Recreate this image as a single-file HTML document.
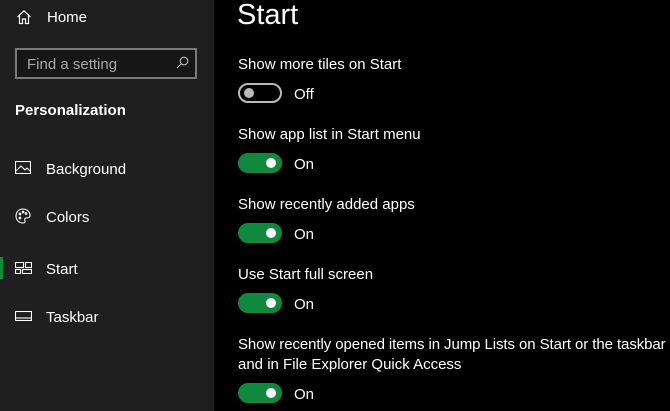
<!DOCTYPE html>
<html><head><style>
body{margin:0;width:670px;height:411px;overflow:hidden;background:#000;font-family:"Liberation Sans",sans-serif;color:#fff;position:relative}
.side{position:absolute;left:0;top:0;width:214px;height:411px;background:#1f1f1f}
.t{position:absolute;white-space:nowrap;line-height:1}
.ic{position:absolute}
.tog{position:absolute;left:238px;width:40px;height:16px;border-radius:10px;background:#10893e;border:2px solid #10893e}
.tog::after{content:"";position:absolute;right:4px;top:3px;width:10px;height:10px;border-radius:50%;background:#fff}
.off{background:#000;border-color:#bbb}
.off::after{left:4px;right:auto;background:#bbb}
</style></head><body>
<div class="side">
<svg class="ic" style="left:16px;top:9px" width="16" height="16" viewBox="0 0 16 16" fill="none" stroke="#fff" stroke-width="1.2"><path d="M1.5 8 L8 1.8 L14.5 8 M3.5 6.5 V14.5 H6.5 V10 H9.5 V14.5 H12.5 V6.5"/></svg>
<div class="t" style="left:47px;top:10px;font-size:15px">Home</div>
<div style="position:absolute;left:15px;top:48px;width:178px;height:27px;border:2px solid #7a7a7a;background:#161616"></div>
<div class="t" style="left:27px;top:57px;font-size:15px;color:#a8a8a8">Find a setting</div>
<svg class="ic" style="left:176px;top:56px" width="13" height="13" viewBox="0 0 13 13" fill="none" stroke="#bbb" stroke-width="1.1"><circle cx="8" cy="5" r="3.8"/><path d="M5.3 7.7 L1 12"/></svg>
<div class="t" style="left:15px;top:103px;font-size:15px;font-weight:bold">Personalization</div>
<svg class="ic" style="left:15px;top:161px" width="16" height="13" viewBox="0 0 16 13" fill="none" stroke="#fff" stroke-width="1.1"><rect x="0.5" y="0.5" width="15" height="12"/><path d="M1 10 L6 5 L10 9 L12 7 L15 10"/></svg>
<div class="t" style="left:46px;top:162px;font-size:15px">Background</div>
<svg class="ic" style="left:15px;top:208px" width="16" height="16" viewBox="0 0 16 16" fill="none" stroke="#fff" stroke-width="1.1"><path d="M8 1 C12 1 15 4 15 7.5 C15 10 12 10 11 10 C9.5 10 9.5 12 10 13 C10.5 14.5 9 15 8 15 C4 15 1 12 1 8 C1 4 4 1 8 1Z"/><circle cx="5" cy="6" r="0.8"/><circle cx="8" cy="4" r="0.8"/><circle cx="11" cy="5.5" r="0.8"/><circle cx="5" cy="10" r="0.8"/></svg>
<div class="t" style="left:46px;top:210px;font-size:15px">Colors</div>
<div style="position:absolute;left:0;top:257px;width:3px;height:22px;background:#10893e"></div>
<svg class="ic" style="left:15px;top:262px" width="17" height="12" viewBox="0 0 17 12" fill="none" stroke="#fff" stroke-width="1.1"><rect x="0.5" y="0.5" width="8" height="5"/><rect x="10.5" y="0.5" width="6" height="5"/><rect x="0.5" y="7.5" width="5" height="4"/><rect x="7.5" y="7.5" width="9" height="4"/></svg>
<div class="t" style="left:46px;top:262px;font-size:15px">Start</div>
<svg class="ic" style="left:15px;top:311px" width="17" height="10" viewBox="0 0 17 10" fill="none" stroke="#fff" stroke-width="1.1"><rect x="0.5" y="0.5" width="16" height="9"/><path d="M1 7 H16"/></svg>
<div class="t" style="left:46px;top:310px;font-size:15px">Taskbar</div>
</div>
<div class="t" style="left:237px;top:1px;font-size:29px">Start</div>
<div class="t" style="left:238px;top:57px;font-size:15px">Show more tiles on Start</div>
<div class="tog off" style="top:83px"></div><div class="t" style="left:294px;top:87px;font-size:15px">Off</div>
<div class="t" style="left:238px;top:127px;font-size:15px">Show app list in Start menu</div>
<div class="tog" style="top:153px"></div><div class="t" style="left:294px;top:157px;font-size:15px">On</div>
<div class="t" style="left:238px;top:197px;font-size:15px">Show recently added apps</div>
<div class="tog" style="top:223px"></div><div class="t" style="left:294px;top:227px;font-size:15px">On</div>
<div class="t" style="left:238px;top:267px;font-size:15px">Use Start full screen</div>
<div class="tog" style="top:293px"></div><div class="t" style="left:294px;top:297px;font-size:15px">On</div>
<div class="t" style="left:238px;top:337px;font-size:15px;letter-spacing:-0.08px">Show recently opened items in Jump Lists on Start or the taskbar</div>
<div class="t" style="left:238px;top:357px;font-size:15px">and in File Explorer Quick Access</div>
<div class="tog" style="top:383px"></div><div class="t" style="left:294px;top:387px;font-size:15px">On</div>
</body></html>
